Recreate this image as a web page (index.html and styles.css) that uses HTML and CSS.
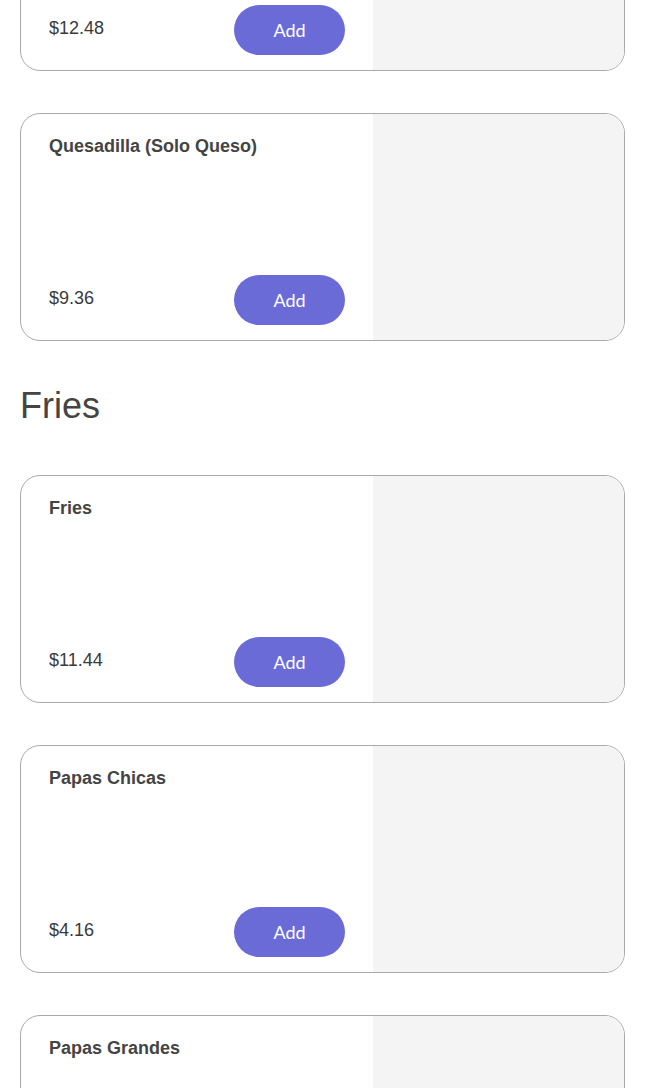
FILE: index.html
```html
<!DOCTYPE html>
<html lang="en">
<head>
    <meta charset="UTF-8">
    <meta name="viewport" content="width=device-width, initial-scale=1.0">
    <title>Menu</title>
    <link rel="stylesheet" href="styles.css">
</head>
<body>
    <div class="menu">
        <section class="category">
            <div class="item">
                <div class="item-info">
                    <h3 class="item-name">Quesadilla</h3>
                    <div class="item-footer">
                        <span class="item-price">$12.48</span>
                        <button class="add-btn">Add</button>
                    </div>
                </div>
                <div class="item-image"></div>
            </div>
            <div class="item">
                <div class="item-info">
                    <h3 class="item-name">Quesadilla (Solo Queso)</h3>
                    <div class="item-footer">
                        <span class="item-price">$9.36</span>
                        <button class="add-btn">Add</button>
                    </div>
                </div>
                <div class="item-image"></div>
            </div>
        </section>

        <section class="category">
            <h2 class="category-title">Fries</h2>
            <div class="item">
                <div class="item-info">
                    <h3 class="item-name">Fries</h3>
                    <div class="item-footer">
                        <span class="item-price">$11.44</span>
                        <button class="add-btn">Add</button>
                    </div>
                </div>
                <div class="item-image"></div>
            </div>
            <div class="item">
                <div class="item-info">
                    <h3 class="item-name">Papas Chicas</h3>
                    <div class="item-footer">
                        <span class="item-price">$4.16</span>
                        <button class="add-btn">Add</button>
                    </div>
                </div>
                <div class="item-image"></div>
            </div>
            <div class="item">
                <div class="item-info">
                    <h3 class="item-name">Papas Grandes</h3>
                    <div class="item-footer">
                        <span class="item-price">$6.24</span>
                        <button class="add-btn">Add</button>
                    </div>
                </div>
                <div class="item-image"></div>
            </div>
        </section>
    </div>
</body>
</html>
```

FILE: styles.css
```css
body {
    font-family: "Liberation Sans", Arial, sans-serif;
    background-color: #fff;
    color: #444;
    margin: 0;
}
.menu {
    width: 605px;
    margin: -157px 0 0 20px;
}
.category {
    display: flex;
    flex-direction: column;
    gap: 42px;
}
.category-title {
    margin: 47px 0 9px 0;
    font-size: 36px;
    font-weight: normal;
    line-height: 1;
    color: #444;
}
.item {
    display: grid;
    grid-template-columns: 352px 1fr;
    height: 228px;
    box-sizing: border-box;
    border: 1px solid #aaa;
    border-radius: 20px;
    overflow: hidden;
}
.item-info {
    display: flex;
    flex-direction: column;
    justify-content: space-between;
    padding: 22px 28px 15px 28px;
}
.item-name {
    margin: 0;
    font-size: 18px;
    font-weight: bold;
    line-height: 21px;
    color: #444;
}
.item-footer {
    display: flex;
    justify-content: space-between;
    align-items: center;
}
.item-price {
    font-size: 18px;
    color: #3a3a3a;
    margin-top: -4px;
}
.add-btn {
    width: 111px;
    height: 50px;
    border: none;
    border-radius: 25px;
    background-color: #6b6bd7;
    color: #fff;
    font-family: Lato, sans-serif;
    font-weight: 400;
    font-size: 18px;
    cursor: pointer;
}
.item-image {
    background-color: #f4f4f4;
}
```
